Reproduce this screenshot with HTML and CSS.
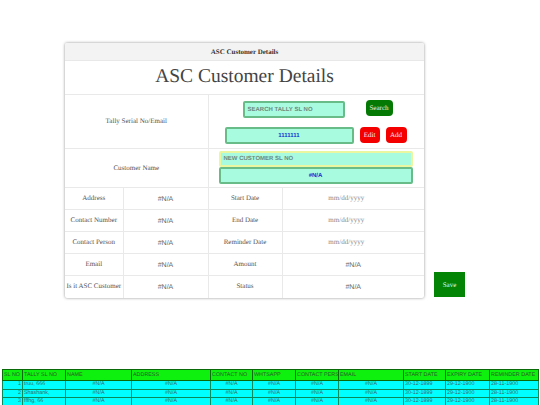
FILE: index.html
```html
<!DOCTYPE html>
<html lang="en">
<head>
<meta charset="utf-8">
<title>ASC Customer Details</title>
<link rel="stylesheet" href="styles.css">
</head>
<body>
<main class="top">
  <section class="card">
    <header class="card-head">ASC Customer Details</header>
    <h1 class="card-title">ASC Customer Details</h1>
    <table class="form">
      <colgroup><col class="c1"><col class="c2"><col class="c3"><col class="c4"></colgroup>
      <tr class="r-tally">
        <td colspan="2">Tally Serial No/Email</td>
        <td colspan="2" class="tools">
          <div class="line line-search">
            <div class="field f-search">SEARCH TALLY SL NO</div>
            <button class="btn green">Search</button>
          </div>
          <div class="line line-value">
            <div class="field f-value val">1111111</div>
            <button class="btn red">Edit</button>
            <button class="btn red">Add</button>
          </div>
        </td>
      </tr>
      <tr class="r-cust">
        <td colspan="2">Customer Name</td>
        <td colspan="2" class="tools stack">
          <div class="field f-new">NEW CUSTOMER SL NO</div>
          <div class="field f-na val">#N/A</div>
        </td>
      </tr>
      <tr><td>Address</td><td class="na">#N/A</td><td>Start Date</td><td class="date">mm/dd/yyyy</td></tr>
      <tr><td>Contact Number</td><td class="na">#N/A</td><td>End Date</td><td class="date">mm/dd/yyyy</td></tr>
      <tr><td>Contact Person</td><td class="na">#N/A</td><td>Reminder Date</td><td class="date">mm/dd/yyyy</td></tr>
      <tr><td>Email</td><td class="na">#N/A</td><td>Amount</td><td class="na">#N/A</td></tr>
      <tr><td class="tight">Is it ASC Customer</td><td class="na">#N/A</td><td>Status</td><td class="na">#N/A</td></tr>
    </table>
  </section>
  <button class="save">Save</button>
</main>
<table class="sheet">
  <colgroup>
    <col class="s1"><col class="s2"><col class="s3"><col class="s4"><col class="s5"><col class="s6"><col class="s7"><col class="s8"><col class="s9"><col class="s10"><col class="s11">
  </colgroup>
  <thead>
    <tr><th>SL NO</th><th>TALLY SL NO</th><th>NAME</th><th>ADDRESS</th><th>CONTACT NO</th><th>WHTSAPP</th><th>CONTACT PERSON</th><th>EMAIL</th><th>START DATE</th><th>EXPIRY DATE</th><th>REMINDER DATE</th></tr>
  </thead>
  <tbody>
    <tr><td class="num">1</td><td>truu, 666</td><td class="mid">#N/A</td><td class="mid">#N/A</td><td class="mid">#N/A</td><td class="mid">#N/A</td><td class="mid">#N/A</td><td class="mid">#N/A</td><td>30-12-1899</td><td>29-12-1900</td><td>28-11-1900</td></tr>
    <tr><td class="num">2</td><td>Shashank,</td><td class="mid">#N/A</td><td class="mid">#N/A</td><td class="mid">#N/A</td><td class="mid">#N/A</td><td class="mid">#N/A</td><td class="mid">#N/A</td><td>30-12-1899</td><td>29-12-1900</td><td>28-11-1900</td></tr>
    <tr><td class="num">3</td><td>fffhg, 66</td><td class="mid">#N/A</td><td class="mid">#N/A</td><td class="mid">#N/A</td><td class="mid">#N/A</td><td class="mid">#N/A</td><td class="mid">#N/A</td><td>30-12-1899</td><td>29-12-1900</td><td>28-11-1900</td></tr>
  </tbody>
</table>
</body>
</html>
```

FILE: styles.css
```css
* { box-sizing: border-box; }
html, body { margin: 0; height: 405px; overflow: hidden; background: #fff; }
body { font-family: "Liberation Serif", serif; color: #444; text-rendering: geometricPrecision; }

.top { display: flex; align-items: flex-start; gap: 10px; padding: 43px 0 0 65px; height: 369px; }

.card { width: 359px; height: 255px; background: #fff; border-radius: 2px; box-shadow: 0 0 3px rgba(0,0,0,.45); overflow: hidden; }
.card-head { height: 18px; line-height: 18px; background: #f3f3f3; text-align: center; font-size: 7px; font-weight: bold; color: #333; border-bottom: 1px solid #e8e8e8; }
.card-title { margin: 0; height: 33px; line-height: 32px; text-align: center; font-size: 19.5px; font-weight: normal; color: #444; }

.form { width: 359px; border-collapse: collapse; table-layout: fixed; font-size: 7px; color: #555; }
.c1 { width: 58px; } .c2 { width: 85px; } .c3 { width: 74px; } .c4 { width: 142px; }
.form td { border-top: 1px solid #e9e9e9; border-left: 1px solid #e9e9e9; height: 22px; padding: 0 0 1px; text-align: center; vertical-align: middle; }
.form td:first-child { border-left: 0; }
.tight { white-space: nowrap; }
.r-tally td { height: 54px; }
.r-cust td { height: 39px; }
.form td.na { font-family: "Liberation Sans", sans-serif; color: #666; padding: 1px 0 0; }
.form td.date { color: #8a8a8a; padding: 0 14px 1px 0; }

.form td.tools { vertical-align: top; padding: 0; }
.line { display: flex; align-items: flex-start; }
.line-search { padding: 5px 0 0 34px; height: 32px; gap: 21px; }
.line-value { padding-left: 16px; gap: 6px; }

.field { height: 17px; line-height: 15px; background: #a9fbe0; border: 2px solid #68bc87; border-radius: 2px; font-family: "Liberation Sans", sans-serif; font-size: 6px; font-weight: bold; color: #6c8a80; text-align: left; padding-left: 3px; }
.f-search { width: 102px; margin-top: 1px; }
.f-value { width: 129px; }
.val { color: #1030d0; text-align: center; padding-left: 0; }
.form td.stack { padding: 2px 10px 0; }
.f-new { width: 194px; height: 16px; line-height: 13px; border-color: #eaf7a0; }
.f-na { width: 194px; }

.btn { border: 0; border-radius: 4px; color: #eee; font-family: "Liberation Serif", serif; font-size: 7px; padding: 0; height: 16px; text-rendering: geometricPrecision; }
.green { background: #047a04; width: 27px; }
.red { background: #f50000; width: 20px; }
.red + .red { width: 21px; }

.save { margin-top: 229px; width: 31px; height: 25px; border: 0; padding: 0; background: #048404; color: #dfe; font-family: "Liberation Serif", serif; font-size: 7px; text-rendering: geometricPrecision; }

.sheet { margin-left: 2px; width: 536px; border-collapse: collapse; table-layout: fixed; font-family: "Liberation Sans", sans-serif; font-size: 5.4px; }
.s1 { width: 20px; } .s2 { width: 43px; } .s3 { width: 66px; } .s4 { width: 79px; } .s5 { width: 42px; } .s6 { width: 43px; } .s7 { width: 43px; } .s8 { width: 65px; } .s9 { width: 42px; } .s10 { width: 44px; } .s11 { width: 49px; }
.sheet th { background: #0ef00e; font-weight: normal; text-align: left; height: 11px; padding: 0 1px; border: 1px solid #0a6a0a; white-space: nowrap; overflow: hidden; color: #2a5a2a; }
.sheet td { background: #0ff; height: 8.5px; line-height: 7px; padding: 0 1px; border: 1px solid #0a8a5a; white-space: nowrap; overflow: hidden; color: #3a6a6a; }
.sheet .num { text-align: right; }
.sheet .mid { text-align: center; }
```
